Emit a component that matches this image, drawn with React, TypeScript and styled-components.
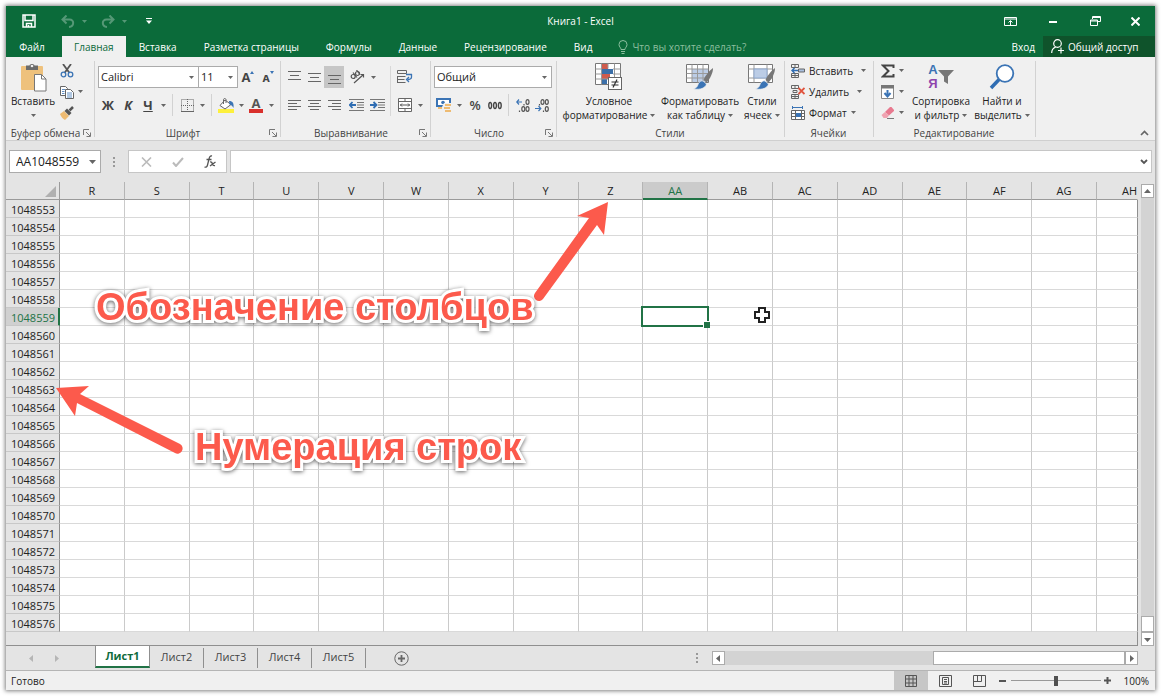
import React from 'react';
import styled, { createGlobalStyle } from 'styled-components';

const GREEN = '#0b6b3a';

const Global = createGlobalStyle`
  * { box-sizing: border-box; }
  body {
    margin: 0;
    padding: 6px;
    background: #fff;
    font-family: "Open Sans", "Noto Sans", sans-serif;
    font-size: 10px;
    line-height: 14px;
    color: #222;
  }
  button, select, input { font: inherit; color: inherit; }
  button { border: 0; padding: 0; margin: 0; background: none; white-space: nowrap; }
  svg { display: block; flex: none; }
`;

const Window = styled.main`
  background: #e4e4e4;
  box-shadow: 0 0 4px 1px rgba(0, 0, 0, 0.5);
`;

/* ---------- title bar and ribbon tabs ---------- */

const TitleBar = styled.header`
  display: grid;
  grid-template-columns: 1fr auto 1fr;
  align-items: center;
  height: 30px;
  background: ${GREEN};
  color: #fff;
`;

const Title = styled.h1`
  margin: 0;
  font-size: 10px;
  font-weight: 400;
`;

const QuickAccess = styled.div`
  display: flex;
  align-items: center;
  gap: 8px;
  padding-left: 13px;
`;

const History = styled.div`
  display: flex;
  &:nth-child(2) { margin-left: 11px; }
`;

const WindowControls = styled.div`
  display: flex;
  justify-content: flex-end;
`;

const IconButton = styled.button<{ $w: number; $dim?: boolean; $active?: boolean }>`
  display: flex;
  align-items: center;
  justify-content: center;
  width: ${p => p.$w}px;
  height: 22px;
  opacity: ${p => (p.$dim ? 0.3 : 1)};
  background: ${p => (p.$active ? '#c6c6c6' : 'transparent')};
`;

const TabBar = styled.nav`
  display: flex;
  height: 21px;
  background: ${GREEN};
  color: #fff;
`;

const FileTab = styled.button`
  width: 56px;
  padding-right: 4px;
`;

const RibbonTab = styled.button<{ $active?: boolean }>`
  padding: ${p => (p.$active ? '0 12px' : '0 14px 0 13px')};
  background: ${p => (p.$active ? '#f0f0f0' : 'transparent')};
  color: ${p => (p.$active ? GREEN : 'inherit')};
`;

const TellMe = styled.button`
  display: flex;
  align-items: center;
  gap: 4px;
  padding: 0 12px;
  color: #8dbf9f;
`;

const SignIn = styled.button`
  margin-left: auto;
  padding: 0 8px;
`;

const Share = styled.button`
  display: flex;
  align-items: center;
  gap: 4px;
  width: 112px;
  padding: 0 0 0 8px;
  background: #0f532b;
`;

/* ---------- ribbon ---------- */

const Ribbon = styled.section`
  display: flex;
  height: 84px;
  background: #f0f0f0;
  border-bottom: 1px solid #cfcfcf;
`;

const Group = styled.div<{ $w: number }>`
  position: relative;
  display: flex;
  flex-direction: column;
  flex: none;
  width: ${p => p.$w}px;
  &::after {
    content: "";
    position: absolute;
    right: 0;
    top: 4px;
    bottom: 3px;
    width: 1px;
    background: #d2d2d2;
  }
`;

const GroupBody = styled.div<{ $pad?: number }>`
  display: flex;
  flex: 1;
  padding: 3px 0 0 ${p => p.$pad ?? 3}px;
`;

const GroupFoot = styled.div`
  display: flex;
  align-items: center;
  height: 14px;
  padding: 0 4px 0 2px;
  color: #444;
`;

const GroupName = styled.span`
  flex: 1;
  text-align: center;
  white-space: nowrap;
`;

const TwoRows = styled.div`
  display: flex;
  flex-direction: column;
  gap: 6px;
  padding-top: 6px;
`;

const ThreeRows = styled.div<{ $w?: number }>`
  display: flex;
  flex-direction: column;
  width: ${p => (p.$w ? p.$w + 'px' : 'auto')};
`;

const Row = styled.div`
  display: flex;
  align-items: center;
  height: 22px;
`;

const SmallButton = styled.button<{ $gap?: number }>`
  display: flex;
  align-items: center;
  gap: 4px;
  height: 21px;
  > svg:last-child:not(:first-child) { margin-left: ${p => p.$gap ?? 0}px; }
`;

const BigButton = styled.button<{ $w: number }>`
  display: flex;
  flex-direction: column;
  align-items: center;
  width: ${p => p.$w}px;
  height: 64px;
`;

const BigIcon = styled.span`
  display: flex;
  align-items: center;
  height: 34px;
`;

const Line = styled.span`
  display: flex;
  align-items: center;
  gap: 3px;
  height: 14px;
`;

const Divider = styled.span`
  align-self: stretch;
  width: 1px;
  margin: 0 4px;
  background: #d2d2d2;
`;

const TallDivider = styled.span`
  width: 1px;
  height: 50px;
  margin: 6px 4px 0;
  background: #d8d8d8;
`;

const Letter = styled.span<{ $style?: string }>`
  font-size: 13px;
  font-weight: ${p => (p.$style === 'percent' ? 600 : 700)};
  color: #444;
  font-style: ${p => (p.$style === 'italic' ? 'italic' : 'normal')};
  text-decoration: ${p => (p.$style === 'underline' ? 'underline' : 'none')};
`;

const Combo = styled.label<{ $w: number; $h?: number }>`
  display: grid;
  align-items: center;
  flex: none;
  width: ${p => p.$w}px;
  height: ${p => p.$h ?? 22}px;
  border: 1px solid #ababab;
  background: #fff;
  & + & { margin-left: -1px; }
  > select, > svg { grid-area: 1 / 1; }
  > svg { justify-self: end; margin-right: 4px; pointer-events: none; }
`;

const Select = styled.select<{ $big?: boolean }>`
  appearance: none;
  width: 100%;
  height: 100%;
  padding: 0 0 0 ${p => (p.$big ? 6 : 2)}px;
  border: 0;
  background: transparent;
  font-size: ${p => (p.$big ? 12 : 11)}px;
`;

const Collapse = styled.button`
  align-self: flex-end;
  margin: 0 6px 4px auto;
`;

/* ---------- formula bar ---------- */

const FormulaBar = styled.div`
  display: flex;
  align-items: center;
  height: 41px;
  padding: 0 3px 0 3px;
`;

const Dots = styled.span`
  display: flex;
  justify-content: center;
  width: 27px;
`;

const FxBox = styled.div`
  display: flex;
  align-items: center;
  justify-content: space-around;
  width: 99px;
  height: 23px;
  margin-right: 3px;
  padding: 0 0 0 2px;
  border: 1px solid #c6c6c6;
  background: #fff;
`;

const FormulaField = styled.div`
  display: flex;
  align-items: center;
  flex: 1;
  height: 23px;
  padding-right: 3px;
  border: 1px solid #c6c6c6;
  background: #fff;
`;

const FormulaInput = styled.input`
  flex: 1;
  min-width: 0;
  height: 100%;
  border: 0;
  background: transparent;
`;

/* ---------- sheet ---------- */

const SheetArea = styled.section`
  position: relative;
  display: flex;
`;

const GridPane = styled.div`
  flex: 1;
  min-width: 0;
  border-bottom: 1px solid #8f8f8f;
`;

const GridTable = styled.table`
  width: 100%;
  table-layout: fixed;
  border-collapse: separate;
  border-spacing: 0;
  font-size: 11px;
`;

const ColHead = styled.th<{ $sel?: boolean; $last?: boolean }>`
  height: 18px;
  padding: ${p => (p.$sel ? 1 : 0)}px 0 0;
  overflow: hidden;
  font-weight: 400;
  text-align: ${p => (p.$last ? 'right' : 'center')};
  border-right: 1px solid ${p => (p.$last ? 'transparent' : '#b4b4b4')};
  border-bottom: ${p => (p.$sel ? '2px solid #217346' : '1px solid #9a9a9a')};
  background: ${p => (p.$sel ? '#cbcbcb' : '#e4e4e4')};
  color: ${p => (p.$sel ? '#217346' : '#222')};
`;

const Corner = styled.th`
  padding: 0 3px 2px 0;
  border-right: 1px solid #9a9a9a;
  border-bottom: 1px solid #9a9a9a;
  vertical-align: bottom;
  > svg { margin-left: auto; }
`;

const RowHead = styled.th<{ $sel?: boolean }>`
  height: 18px;
  padding: 2px ${p => (p.$sel ? 3 : 4)}px 0 0;
  font-weight: 400;
  text-align: right;
  border-right: ${p => (p.$sel ? '2px solid #217346' : '1px solid #8f8f8f')};
  border-bottom: 1px solid #c8c8c8;
  background: ${p => (p.$sel ? '#d0d0d0' : '#e4e4e4')};
  color: ${p => (p.$sel ? '#217346' : '#222')};
`;

const Cell = styled.td<{ $last?: boolean }>`
  height: 18px;
  padding: 0;
  background: #fff;
  border-right: 1px solid ${p => (p.$last ? '#8f8f8f' : '#cacaca')};
  border-bottom: 1px solid #d9d9d9;
`;

const ActiveCell = styled(Cell)`
  position: relative;
  &::before {
    content: "";
    position: absolute;
    inset: -2px -2px -2px -2px;
    border: 2px solid #217346;
  }
  &::after {
    content: "";
    position: absolute;
    right: -3px;
    bottom: -3px;
    width: 6px;
    height: 6px;
    border: solid #fff;
    border-width: 1px 0 0 1px;
    background: #217346;
  }
`;

const GridEnd = styled.div`
  height: 13px;
  border-right: 1px solid #8f8f8f;
`;

const VScroll = styled.div`
  display: flex;
  flex-direction: column;
  width: 17px;
  padding: 2px 1px 0 3px;
`;

const ScrollButton = styled.button`
  display: flex;
  align-items: center;
  justify-content: center;
  flex: none;
  width: 13px;
  height: 14px;
  border: 1px solid #ababab;
  background: #fff;
`;

const Track = styled.div`
  display: flex;
  flex: 1;
  align-items: flex-end;
  justify-content: flex-end;
  background: #d3d3d3;
`;

const Thumb = styled.div<{ $w: string; $h: number }>`
  width: ${p => p.$w};
  height: ${p => p.$h}px;
  border: 1px solid #ababab;
  background: #fff;
`;

const Overlay = styled.svg`
  position: absolute;
  left: 0;
  top: 0;
  pointer-events: none;
`;

const Note = styled.p<{ $x: number; $y: number }>`
  position: absolute;
  left: ${p => p.$x}px;
  top: ${p => p.$y}px;
  margin: 0;
  font: 700 38px/44px "Liberation Sans", Arial, sans-serif;
  white-space: nowrap;
  color: #fc5a4c;
  -webkit-text-stroke: 6px #fff;
  paint-order: stroke fill;
  filter: drop-shadow(0 1px 2px rgba(0, 0, 0, 0.6));
`;

/* ---------- sheet tabs and status bar ---------- */

const SheetBar = styled.div`
  display: flex;
  align-items: center;
  height: 24px;
  font-size: 11px;
`;

const SheetNav = styled.div`
  display: flex;
  justify-content: center;
  gap: 18px;
  width: 89px;
  padding-right: 13px;
`;

const SheetTab = styled.button<{ $active?: boolean }>`
  align-self: flex-start;
  width: ${p => (p.$active ? 55 : 54)}px;
  color: #444;
  ${p =>
    p.$active
      ? `
    height: 23px;
    margin-top: -1px;
    border: 1px solid #8f8f8f;
    border-top: 0;
    border-bottom: 2px solid #217346;
    background: #fff;
    color: #0f6b3c;
    font-weight: 700;
  `
      : `
    height: 20px;
    margin-top: 2px;
    padding-bottom: 2px;
    border-right: 1px solid #8f8f8f;
  `}
`;

const AddSheet = styled.button`
  margin-left: 28px;
`;

const HScroll = styled.div`
  display: flex;
  width: 426px;
  height: 14px;
  margin-right: 17px;
`;

const BarDots = styled.span`
  margin: 0 13px 0 auto;
`;

const StatusBar = styled.footer`
  display: flex;
  align-items: center;
  height: 20px;
  padding: 0 6px 0 5px;
  border-top: 1px solid #b5b5b5;
  background: #f0f0f0;
`;

const StatusText = styled.span`
  margin-right: auto;
`;

const ViewButton = styled.button<{ $active?: boolean }>`
  display: flex;
  align-items: center;
  justify-content: center;
  width: 34px;
  height: 19px;
  background: ${p => (p.$active ? '#c6c6c6' : 'transparent')};
`;

const Zoom = styled.input`
  appearance: none;
  width: 90px;
  height: 13px;
  margin: 0 3px;
  background: linear-gradient(#999, #999) center / 100% 1px no-repeat;
  &::-webkit-slider-thumb {
    appearance: none;
    width: 4px;
    height: 10px;
    background: #505050;
  }
`;

const ZoomValue = styled.span`
  width: 38px;
  text-align: right;
`;

/* ---------- icons ---------- */

const Caret = ({ c = '#666' }: { c?: string }) => (
  <svg width="5" height="3" viewBox="0 0 5 3"><path d="M0 0h5L2.5 3z" fill={c} /></svg>
);

const CaretButton = ({ w = 10, label, dim, c }: { w?: number; label: string; dim?: boolean; c?: string }) => (
  <IconButton $w={w} $dim={dim} aria-label={label}><Caret c={c} /></IconButton>
);

const Launcher = () => (
  <button aria-label="Параметры">
    <svg width="8" height="8" viewBox="0 0 8 8" fill="none" stroke="#777">
      <path d="M.5 6V.5H6M3 3l4 4M7.5 3.500V7.500H3.500" />
    </svg>
  </button>
);

const SaveIcon = () => (
  <svg width="14" height="14" viewBox="0 0 14 14" fill="none" stroke="#fff" strokeWidth="1.500">
    <path d="M1 1h12v12H1zM3 1v5.500h8V1M4.500 13V9.500h5V13" /><path d="M6.500 11v2" />
  </svg>
);

const Undo = ({ flip }: { flip?: boolean }) => (
  <svg width="14" height="13" viewBox="0 0 14 13" fill="none" stroke="#fff" strokeWidth="2">
    <g transform={flip ? 'translate(14 0) scale(-1 1)' : undefined}>
      <path d="M5.500 .5L1.500 4.500l4 4M2 4.500h6.500c5 0 5 7-.5 7.500" />
    </g>
  </svg>
);

const Paste = () => (
  <svg width="27" height="29" viewBox="0 0 27 29">
    <rect x="1" y="3" width="22" height="24" rx="1" fill="#eec17c" />
    <path d="M6 2.500h3.500C10 .5 14 .5 14.500 2.500H18V7H6z" fill="#6b6b6b" /><circle cx="12" cy="3" r="1.300" fill="#f0f0f0" />
    <path d="M14.500 11.500h7l4.500 4.500v12H14.500z" fill="#fff" stroke="#777" />
    <path d="M21.500 11.500V16H26" fill="none" stroke="#777" />
  </svg>
);

const Cut = () => (
  <svg width="14" height="14" viewBox="0 0 14 14" fill="none">
    <path d="M3 0l6.500 9M11 0L4.500 9" stroke="#555" strokeWidth="1.800" />
    <circle cx="3.500" cy="10.500" r="2.300" stroke="#3b74b5" strokeWidth="1.300" />
    <circle cx="10.500" cy="10.500" r="2.300" stroke="#3b74b5" strokeWidth="1.300" />
  </svg>
);

const Copy = () => (
  <svg width="14" height="14" viewBox="0 0 14 14" fill="#fff" stroke="#666">
    <path d="M.5 1.500h5l2 2v7h-7z" /><path d="M5.500 4.500h5l3 3v6h-8z" />
    <path d="M2 4.500h3M2 6.500h2.500M2 8.500h2.500M7 8h5M7 10h5M7 12h5" stroke="#3b74b5" strokeWidth=".8" />
  </svg>
);

const Painter = () => (
  <svg width="14" height="14" viewBox="0 0 14 14">
    <path d="M0 8l4-3 5 5-4 4C3 13 1 11 0 8z" fill="#eebb72" />
    <path d="M4.500 5L7 2.500 11.500 7 9 9.500z" fill="#555" /><path d="M9.500 4.500L13 1" stroke="#555" strokeWidth="2.500" />
  </svg>
);

const BordersIcon = () => (
  <svg width="13" height="13" viewBox="0 0 13 13" fill="none" stroke="#666">
    <path d="M.5 .5h12v12H.5zM6.500 0v13M0 6.500h13" strokeDasharray="1 1" /><path d="M0 12.500h13" />
  </svg>
);

const FillIcon = () => (
  <svg width="17" height="15" viewBox="0 0 17 15">
    <rect x="0" y="11" width="16" height="4" fill="#fdf03c" />
    <path d="M7 2l6 4.500-6 4.500-5-3.500z" fill="#fff" stroke="#666" /><path d="M5.500 6V1.500a1.300 1.300 0 0 1 2.500 0V5" fill="none" stroke="#666" />
    <path d="M11 3c4 0 5 2.500 4.500 7-1-2-2-3-4-3.500z" fill="#3b74b5" />
  </svg>
);

const FontColorMark = styled.span`
  display: flex;
  flex-direction: column;
  align-items: center;
  width: 14px;
  height: 15px;
  border-bottom: 4px solid #d9302c;
  font-size: 13px;
  line-height: 11px;
  font-weight: 700;
  color: #555;
`;

const Lines = ({ rows, w = 13, h = 13, c = '#666' }: { rows: [number, number, number][]; w?: number; h?: number; c?: string }) => (
  <svg width={w} height={h} viewBox={`0 0 ${w} ${h}`}>
    {rows.map(([x, y, l]) => <rect key={y} x={x} y={y} width={l} height="1" fill={c} />)}
  </svg>
);

const Orientation = () => (
  <svg width="15" height="14" viewBox="0 0 15 14" fill="none" stroke="#555" strokeWidth="1.200">
    <circle cx="3.200" cy="6.500" r="2" /><path d="M3 2.500l4 5" /><circle cx="7.500" cy="3.500" r="2" /><path d="M6.500 0l3.500 4.500" />
    <path d="M4 13L13.500 4.500M10.500 4.500h3v3" />
  </svg>
);

const Indent = ({ right }: { right?: boolean }) => (
  <svg width="15" height="12" viewBox="0 0 15 12">
    <path d="M0 .5h15M8 3.500h7M8 6h7M8 8.500h7M0 11.500h15" stroke="#777" />
    <path d={right ? 'M0 6h6M3.500 3L6.500 6 3.500 9' : 'M7 6H1M3.500 3L.8 6l2.700 3'} stroke="#2f6db3" strokeWidth="1.800" fill="none" />
  </svg>
);

const Wrap = () => (
  <svg width="16" height="14" viewBox="0 0 16 14" fill="none" stroke="#666">
    <path d="M.5 .5h9v3h-9zM.5 6.500h8M.5 9.500h7M.5 12.500h8M.5 6v7" />
    <path d="M9 4.500h6M14.500 4v3c0 1.500-1 2.500-4 2.500M12 7l-2.500 2.500L12 12" stroke="#3b74b5" strokeWidth="1.300" />
  </svg>
);

const Merge = () => (
  <svg width="14" height="14" viewBox="0 0 14 14" fill="none" stroke="#666">
    <path d="M.5 .5h13v13H.5zM.5 3.500h13M.5 10.500h13M7 .5v3M7 10.500v3" fill="#fff" />
    <path d="M2 7h10M4 5.500L2.500 7 4 8.500M10 5.500L11.500 7 10 8.500" stroke="#555" />
  </svg>
);

const Currency = () => (
  <svg width="16" height="14" viewBox="0 0 16 14">
    <path d="M1 1h13v7H1z" fill="#fff" stroke="#3b74b5" strokeWidth="2" /><circle cx="7" cy="4.500" r="1.800" fill="#3b74b5" />
    <path d="M8 5h7v9H6V9z" fill="#f0f0f0" />
    <g fill="#eebb72"><rect x="9" y="6" width="6" height="2" /><rect x="8" y="9" width="6" height="2" /><rect x="9" y="12" width="6" height="2" /><rect x="2" y="9" width="4" height="2" /></g>
  </svg>
);

const Decimal = ({ less }: { less?: boolean }) => (
  <svg width="14" height="13" viewBox="0 0 14 13" fill="none" stroke="#555" strokeWidth="1.200">
    {less ? (
      <>
        <ellipse cx="7.500" cy="3" rx="1.500" ry="2.300" /><ellipse cx="11.800" cy="3" rx="1.500" ry="2.300" /><path d="M4.500 5v1.500" />
        <ellipse cx="11.800" cy="10" rx="1.500" ry="2.300" /><path d="M8.500 11.500V13" /><path d="M0 9.500h5.500M3.500 7l2.300 2.500L3.500 12" stroke="#3b74b5" />
      </>
    ) : (
      <>
        <ellipse cx="11.500" cy="3" rx="1.500" ry="2.300" /><path d="M8 5v1.500M3.500 11.500V13" />
        <ellipse cx="7.300" cy="10" rx="1.500" ry="2.300" /><ellipse cx="11.500" cy="10" rx="1.500" ry="2.300" /><path d="M6 3H.8M3 .5L.8 3 3 5.500" stroke="#3b74b5" />
      </>
    )}
  </svg>
);

const CondFormat = () => (
  <svg width="28" height="28" viewBox="0 0 28 28">
    <path d="M.5 .5h25v21H.5z" fill="#fff" stroke="#777" />
    <rect x="7" y="1" width="6" height="5" fill="#cf5b4c" /><rect x="7" y="6" width="11" height="5" fill="#3b6fa8" />
    <rect x="7" y="11" width="8" height="5" fill="#cf5b4c" /><rect x="7" y="16" width="5" height="5" fill="#3b6fa8" />
    <path d="M.5 6h6M18 6h7.500M.5 11h6M18 11h7.500M.5 16h25M6.500 .5v21M13 .5v5M19.500 .5v21" stroke="#999" fill="none" />
    <rect x="13.500" y="14.500" width="13" height="12" fill="#fff" stroke="#666" />
    <path d="M16.500 19h7M16.500 22h7M22 16.500l-4 8" stroke="#333" strokeWidth="1.200" />
  </svg>
);

const Brush = () => (
  <g>
    <path d="M27 4c-4 3-8 8-9.500 12l3 2.500C24 15 27 9 27 4z" fill="#777" />
    <path d="M17 17l3.500 3c-1 4-6 6-13 5 4-1.500 4-3.500 5-5.500 1-2 3-3 4.500-2.500z" fill="#3b74b5" stroke="#f0f0f0" strokeWidth=".7" />
  </g>
);

const FormatTable = () => (
  <svg width="28" height="27" viewBox="0 0 28 27">
    <path d="M.5 .5h22v18H.5z" fill="#fff" stroke="#777" /><rect x="6" y="5" width="16" height="13" fill="#bccde6" />
    <path d="M.5 5h22M.5 9.500h22M.5 14h22M6 .5v18M11.500 .5v18M17 .5v18" stroke="#999" fill="none" /><Brush />
  </svg>
);

const CellStyles = () => (
  <svg width="28" height="27" viewBox="0 0 28 27">
    <path d="M.5 .5h24v18H.5z" fill="#fff" stroke="#777" />
    <path d="M.5 5h24M.5 14h24M6 .5v18M19 .5v18" stroke="#999" fill="none" /><rect x="6" y="5" width="13" height="9" fill="#bccde6" stroke="#8fa9d0" /><Brush />
  </svg>
);

const CellsIcon = ({ kind }: { kind: 'ins' | 'del' | 'fmt' }) => (
  <svg width="14" height="14" viewBox="0 0 14 14" fill="none" stroke="#666">
    {kind === 'fmt' ? (
      <>
        <path d="M1 1.500h11M1.500 0v3M11.500 0v3" stroke="#3b74b5" /><path d="M.5 4.500h13v9H.5zM.5 7.500h13M.5 10.500h13M4.500 4.500v9M10.500 4.500v9" fill="#fff" />
        <rect x="5" y="7" width="5" height="4" fill="#3b74b5" stroke="none" />
      </>
    ) : (
      <>
        <path d="M.5 .5h7v3h-7zM4 .5v3M.5 9.500h7v4h-7zM4 9.500v4M.5 11.500h7" />
        {kind === 'ins' ? (
          <><path d="M7.500 5h6v3h-6z" fill="#a9c0e0" /><path d="M7 6.500H1M3.500 4L1 6.500 3.500 9" stroke="#2f6db3" strokeWidth="1.500" /></>
        ) : (
          <><path d="M2 5.500h4v2H2z" /><path d="M7.500 3l6 6M13.500 3l-6 6" stroke="#e0533d" strokeWidth="1.800" /></>
        )}
      </>
    )}
  </svg>
);

const Sigma = () => (
  <svg width="14" height="14" viewBox="0 0 14 14" fill="none" stroke="#444" strokeWidth="2"><path d="M12.500 4V1.500H2L7.500 7 2 12.500h10.500V10" /></svg>
);
const FillDown = () => (
  <svg width="14" height="14" viewBox="0 0 14 14"><path d="M.5 .5h12v13H.5z" fill="#fff" stroke="#888" /><rect width="13" height="3.500" fill="#777" />
    <path d="M6.500 5v6M3.500 8l3 3.500 3-3.500" fill="none" stroke="#3b74b5" strokeWidth="2" /></svg>
);
const Eraser = () => (
  <svg width="14" height="12" viewBox="0 0 14 12"><path d="M4 5l5-5h1.500L13 3v1L8 8.500z" fill="#e8798f" /><path d="M.5 8L4 5l4 3.500L6 11H2.500z" fill="#f0a3b1" /><path d="M6 11.500h7" stroke="#777" /></svg>
);

const SortLetters = styled.span<{ $c: string }>`
  font: 700 13px/14px "Liberation Sans", Arial, sans-serif;
  color: ${p => p.$c};
`;
const SortStack = styled.span`
  display: flex;
  flex-direction: column;
  align-items: center;
`;
const Funnel = () => (
  <svg width="16" height="14" viewBox="0 0 16 14"><path d="M0 0h16l-6 6.500V14l-4-2.500v-5z" fill="#777" /></svg>
);
const Search = () => (
  <svg width="26" height="26" viewBox="0 0 26 26"><path d="M2 24l8.500-9" stroke="#2f6db3" strokeWidth="3.500" /><circle cx="16" cy="9.500" r="8.300" fill="#fff" stroke="#3b74b5" strokeWidth="1.800" /></svg>
);

const ArrowHead = ({ d, c = '#666' }: { d: 'l' | 'r' | 'u' | 'd'; c?: string }) => {
  const paths = { l: 'M5 0v7L1 3.500z', r: 'M2 0v7l4-3.500z', u: 'M0 5h7L3.500 1z', d: 'M0 2h7L3.500 6z' };
  return <svg width="7" height="7" viewBox="0 0 7 7"><path d={paths[d]} fill={c} /></svg>;
};

const DotColumn = () => (
  <svg width="3" height="10" viewBox="0 0 3 10" fill="#999"><path d="M0 0h2v2H0zM0 4h2v2H0zM0 8h2v2H0z" /></svg>
);

/* ---------- data ---------- */

const tabs = ['Вставка', 'Разметка страницы', 'Формулы', 'Данные', 'Рецензирование', 'Вид'];
const columns = ['R', 'S', 'T', 'U', 'V', 'W', 'X', 'Y', 'Z', 'AA', 'AB', 'AC', 'AD', 'AE', 'AF', 'AG', 'AH'];
const rows = Array.from({ length: 24 }, (_, i) => 1048553 + i);

const Foot = ({ name, plain }: { name: string; plain?: boolean }) => (
  <GroupFoot><GroupName>{name}</GroupName>{!plain && <Launcher />}</GroupFoot>
);

export default function App() {
  return (
    <Window>
      <Global />
      <TitleBar>
        <QuickAccess>
          <IconButton $w={20} aria-label="Сохранить"><SaveIcon /></IconButton>
          <History>
            <IconButton $w={20} $dim aria-label="Отменить"><Undo /></IconButton>
            <CaretButton w={12} dim c="#fff" label="Список отмены" />
          </History>
          <History>
            <IconButton $w={20} $dim aria-label="Вернуть"><Undo flip /></IconButton>
            <CaretButton w={12} dim c="#fff" label="Список возврата" />
          </History>
          <IconButton $w={22} aria-label="Настройка панели">
            <svg width="6" height="6" viewBox="0 0 6 6" fill="#fff"><path d="M0 0h6v1H0zM0 2.500h6L3 6z" /></svg>
          </IconButton>
        </QuickAccess>
        <Title>Книга1 - Excel</Title>
        <WindowControls>
          <IconButton $w={44} aria-label="Параметры ленты">
            <svg width="13" height="11" viewBox="0 0 13 11" fill="none" stroke="#fff"><path d="M.5 1.500h12v8H.5zM.5 3h12M6.500 9V5M4.500 6.500l2-2 2 2" /></svg>
          </IconButton>
          <IconButton $w={42} aria-label="Свернуть"><svg width="8" height="8" viewBox="0 0 8 8"><rect y="4" width="8" height="2" fill="#fff" /></svg></IconButton>
          <IconButton $w={42} aria-label="Восстановить">
            <svg width="11" height="10" viewBox="0 0 11 10" fill="none" stroke="#fff"><path d="M2.500 3V.5h8v5H8M2.500 1.500h8M.5 4h7v5.500h-7zM.5 5h7" /></svg>
          </IconButton>
          <IconButton $w={39} aria-label="Закрыть"><svg width="9" height="9" viewBox="0 0 9 9" stroke="#fff" strokeWidth="2"><path d="M.5 .5l8 8M8.500 .5l-8 8" /></svg></IconButton>
        </WindowControls>
      </TitleBar>

      <TabBar>
        <FileTab>Файл</FileTab>
        <RibbonTab $active>Главная</RibbonTab>
        {tabs.map(t => <RibbonTab key={t}>{t}</RibbonTab>)}
        <TellMe>
          <svg width="10" height="14" viewBox="0 0 10 14" fill="none" stroke="#8dbf9f"><path d="M3 9.500C3 7.500 1 7 1 4.500a4 4 0 0 1 8 0C9 7 7 7.500 7 9.500zM3 11.500h4M3.500 13.500h3" /></svg>
          Что вы хотите сделать?
        </TellMe>
        <SignIn>Вход</SignIn>
        <Share>
          <svg width="13" height="15" viewBox="0 0 13 15" fill="none" stroke="#fff" strokeWidth="1.200"><circle cx="6.500" cy="4.500" r="3.800" /><path d="M.7 14c0-3 1.500-5 4-6M10 8.500v6M7 11.500h6" /></svg>
          Общий доступ
        </Share>
      </TabBar>

      <Ribbon>
        <Group $w={89}>
          <GroupBody $pad={0}>
            <BigButton $w={54}>
              <BigIcon><Paste /></BigIcon><Line>Вставить</Line><Line><Caret /></Line>
            </BigButton>
            <ThreeRows>
              <SmallButton aria-label="Вырезать"><Cut /></SmallButton>
              <SmallButton aria-label="Копировать"><Copy /><Caret /></SmallButton>
              <SmallButton aria-label="Формат по образцу"><Painter /></SmallButton>
            </ThreeRows>
          </GroupBody>
          <Foot name="Буфер обмена" />
        </Group>

        <Group $w={186}>
          <GroupBody>
            <TwoRows>
              <Row>
                <Combo $w={101}><Select aria-label="Шрифт"><option>Calibri</option></Select><Caret /></Combo>
                <Combo $w={40}><Select aria-label="Размер"><option>11</option></Select><Caret /></Combo>
                <IconButton $w={20} aria-label="Увеличить размер"><Letter>A</Letter><svg width="4" height="12" viewBox="0 0 4 12"><path d="M0 3h4L2 0z" fill="#3b74b5" /></svg></IconButton>
                <IconButton $w={20} aria-label="Уменьшить размер"><Letter>ᴀ</Letter><svg width="4" height="12" viewBox="0 0 4 12"><path d="M0 0h4L2 3z" fill="#3b74b5" /></svg></IconButton>
              </Row>
              <Row>
                <IconButton $w={20}><Letter>Ж</Letter></IconButton>
                <IconButton $w={20}><Letter $style="italic">К</Letter></IconButton>
                <IconButton $w={20}><Letter $style="underline">Ч</Letter></IconButton>
                <CaretButton label="Подчёркивание" />
                <Divider />
                <IconButton $w={20} aria-label="Границы"><BordersIcon /></IconButton>
                <CaretButton label="Виды границ" />
                <Divider />
                <IconButton $w={20} aria-label="Заливка"><FillIcon /></IconButton>
                <CaretButton label="Цвет заливки" />
                <IconButton $w={20} aria-label="Цвет текста"><FontColorMark>A</FontColorMark></IconButton>
                <CaretButton label="Цвета текста" />
              </Row>
            </TwoRows>
          </GroupBody>
          <Foot name="Шрифт" />
        </Group>

        <Group $w={150}>
          <GroupBody>
            <TwoRows>
              <Row>
                <IconButton $w={20} aria-label="По верхнему краю"><Lines rows={[[0, 0, 13], [2, 4, 9], [0, 8, 13]]} /></IconButton>
                <IconButton $w={20} aria-label="По середине"><Lines rows={[[0, 2, 13], [2, 6, 9], [0, 10, 13]]} /></IconButton>
                <IconButton $w={20} $active aria-label="По нижнему краю"><Lines rows={[[0, 4, 13], [2, 8, 9], [0, 12, 13]]} /></IconButton>
                <IconButton $w={26} aria-label="Ориентация"><Orientation /></IconButton>
                <CaretButton w={6} label="Виды ориентации" />
              </Row>
              <Row>
                <IconButton $w={20} aria-label="По левому краю"><Lines rows={[[0, 1, 13], [0, 4, 9], [0, 7, 13], [0, 10, 9]]} /></IconButton>
                <IconButton $w={20} aria-label="По центру"><Lines rows={[[0, 1, 13], [2, 4, 9], [0, 7, 13], [2, 10, 9]]} /></IconButton>
                <IconButton $w={20} aria-label="По правому краю"><Lines rows={[[0, 1, 13], [4, 4, 9], [0, 7, 13], [4, 10, 9]]} /></IconButton>
                <IconButton $w={24} aria-label="Уменьшить отступ"><Indent /></IconButton>
                <IconButton $w={18} aria-label="Увеличить отступ"><Indent right /></IconButton>
              </Row>
            </TwoRows>
            <TallDivider />
            <TwoRows>
              <Row><IconButton $w={20} aria-label="Перенос текста"><Wrap /></IconButton></Row>
              <Row><IconButton $w={20} aria-label="Объединить"><Merge /></IconButton><CaretButton label="Виды объединения" /></Row>
            </TwoRows>
          </GroupBody>
          <Foot name="Выравнивание" />
        </Group>

        <Group $w={126}>
          <GroupBody>
            <TwoRows>
              <Row><Combo $w={118}><Select aria-label="Формат числа"><option>Общий</option></Select><Caret /></Combo></Row>
              <Row>
                <IconButton $w={20} aria-label="Денежный"><Currency /></IconButton>
                <CaretButton label="Валюты" />
                <IconButton $w={22}><Letter $style="percent">%</Letter></IconButton>
                <IconButton $w={18} aria-label="Разделитель тысяч">
                  <svg width="14" height="9" viewBox="0 0 14 9" fill="none" stroke="#444" strokeWidth="1.400"><ellipse cx="2.200" cy="4.500" rx="1.400" ry="3" /><ellipse cx="7" cy="4.500" rx="1.400" ry="3" /><ellipse cx="11.800" cy="4.500" rx="1.400" ry="3" /></svg>
                </IconButton>
                <Divider />
                <IconButton $w={20} aria-label="Увеличить разрядность"><Decimal /></IconButton>
                <IconButton $w={18} aria-label="Уменьшить разрядность"><Decimal less /></IconButton>
              </Row>
            </TwoRows>
          </GroupBody>
          <Foot name="Число" />
        </Group>

        <Group $w={228}>
          <GroupBody>
            <BigButton $w={98}>
              <BigIcon><CondFormat /></BigIcon><Line>Условное</Line><Line>форматирование<Caret /></Line>
            </BigButton>
            <BigButton $w={84}>
              <BigIcon><FormatTable /></BigIcon><Line>Форматировать</Line><Line>как таблицу<Caret /></Line>
            </BigButton>
            <BigButton $w={40}>
              <BigIcon><CellStyles /></BigIcon><Line>Стили</Line><Line>ячеек<Caret /></Line>
            </BigButton>
          </GroupBody>
          <Foot name="Стили" plain />
        </Group>

        <Group $w={89}>
          <GroupBody $pad={6}>
            <ThreeRows>
              <SmallButton $gap={4}><CellsIcon kind="ins" />Вставить<Caret /></SmallButton>
              <SmallButton $gap={4}><CellsIcon kind="del" />Удалить<Caret /></SmallButton>
              <SmallButton><CellsIcon kind="fmt" />Формат<Caret /></SmallButton>
            </ThreeRows>
          </GroupBody>
          <Foot name="Ячейки" plain />
        </Group>

        <Group $w={162}>
          <GroupBody $pad={7}>
            <ThreeRows $w={26}>
              <SmallButton aria-label="Сумма"><Sigma /><Caret /></SmallButton>
              <SmallButton aria-label="Заполнить"><FillDown /><Caret /></SmallButton>
              <SmallButton aria-label="Очистить"><Eraser /><Caret /></SmallButton>
            </ThreeRows>
            <BigButton $w={68}>
              <BigIcon><SortStack><SortLetters $c="#3b74b5">А</SortLetters><SortLetters $c="#8e44ad">Я</SortLetters></SortStack><Funnel /></BigIcon>
              <Line>Сортировка</Line><Line>и фильтр<Caret /></Line>
            </BigButton>
            <BigButton $w={54}>
              <BigIcon><Search /></BigIcon><Line>Найти и</Line><Line>выделить<Caret /></Line>
            </BigButton>
          </GroupBody>
          <Foot name="Редактирование" plain />
        </Group>
        <Collapse aria-label="Свернуть ленту">
          <svg width="9" height="6" viewBox="0 0 9 6" fill="none" stroke="#666" strokeWidth="1.700"><path d="M1 5l3.500-3.500L8 5" /></svg>
        </Collapse>
      </Ribbon>

      <FormulaBar>
        <Combo $w={92} $h={23}><Select $big aria-label="Имя ячейки"><option>AA1048559</option></Select>
          <svg width="7" height="4" viewBox="0 0 7 4"><path d="M0 0h7L3.500 4z" fill="#666" /></svg></Combo>
        <Dots><DotColumn /></Dots>
        <FxBox>
          <button aria-label="Отмена"><svg width="11" height="10" viewBox="0 0 11 10" stroke="#bbb" strokeWidth="1.600"><path d="M1 .5l9 9M10 .5l-9 9" /></svg></button>
          <button aria-label="Ввод"><svg width="12" height="10" viewBox="0 0 12 10" fill="none" stroke="#bbb" strokeWidth="2"><path d="M1 5.500L4 9l7-8" /></svg></button>
          <button aria-label="Вставить функцию">
            <svg width="12" height="13" viewBox="0 0 12 13" fill="none" stroke="#555" strokeWidth="1.300"><path d="M8 1C6 .5 5.500 2 5 4L3.500 10c-.5 2-1.500 2.500-3 2M2.500 4.500h5M6 7c1.500-.5 2 .5 2.500 2s1 2 2.500 1.500M11.500 7L6 11" /></svg>
          </button>
        </FxBox>
        <FormulaField>
          <FormulaInput aria-label="Строка формул" />
          <button aria-label="Развернуть строку формул"><svg width="8" height="6" viewBox="0 0 8 6" fill="none" stroke="#555" strokeWidth="1.800"><path d="M1 1l3 3 3-3" /></svg></button>
        </FormulaField>
      </FormulaBar>

      <SheetArea>
        <GridPane>
          <GridTable>
            <colgroup>
              <col style={{ width: 54 }} />
              {columns.map((c, i) => <col key={c} style={i === columns.length - 1 ? { width: 41 } : undefined} />)}
            </colgroup>
            <thead>
              <tr>
                <Corner aria-label="Выделить всё"><svg width="11" height="11" viewBox="0 0 11 11"><path d="M11 0v11H0z" fill="#b0b0b0" /></svg></Corner>
                {columns.map(c => <ColHead key={c} scope="col" $sel={c === 'AA'} $last={c === 'AH'}>{c}</ColHead>)}
              </tr>
            </thead>
            <tbody>
              {rows.map(r => (
                <tr key={r}>
                  <RowHead scope="row" $sel={r === 1048559}>{r}</RowHead>
                  {columns.map(c => r === 1048559 && c === 'AA' ? <ActiveCell key={c} /> : <Cell key={c} $last={c === 'AH'} />)}
                </tr>
              ))}
            </tbody>
          </GridTable>
          <GridEnd />
        </GridPane>
        <VScroll>
          <ScrollButton aria-label="Вверх"><ArrowHead d="u" /></ScrollButton>
          <Track><Thumb $w="13px" $h={16} /></Track>
          <ScrollButton aria-label="Вниз"><ArrowHead d="d" /></ScrollButton>
        </VScroll>
        <Overlay width="780" height="290" viewBox="0 0 780 290">
          <g fill="#fc5a4c">
            <path d="M602 20L598 53l-7-10-54 74a5 5 0 0 1-8-6l54-75-12-2z" />
            <path d="M50 206l33-2-9 8 100 50a5 5 0 0 1-5 9L71 221l-2 13z" />
          </g>
          <path d="M753 126h6v4h4v6h-4v4h-6v-4h-4v-6h4z" fill="#fff" stroke="#222" strokeWidth="2" />
        </Overlay>
        <Note $x={90} $y={103}>Обозначение столбцов</Note>
        <Note $x={189} $y={243}>Нумерация строк</Note>
      </SheetArea>

      <SheetBar>
        <SheetNav><ArrowHead d="l" c="#b5b5b5" /><ArrowHead d="r" c="#b5b5b5" /></SheetNav>
        <SheetTab $active>Лист1</SheetTab>
        <SheetTab>Лист2</SheetTab>
        <SheetTab>Лист3</SheetTab>
        <SheetTab>Лист4</SheetTab>
        <SheetTab>Лист5</SheetTab>
        <AddSheet aria-label="Новый лист">
          <svg width="15" height="15" viewBox="0 0 15 15" fill="none" stroke="#666"><circle cx="7.500" cy="7.500" r="6.700" /><path d="M7.500 4v7M4 7.500h7" strokeWidth="1.800" /></svg>
        </AddSheet>
        <BarDots><DotColumn /></BarDots>
        <HScroll>
          <ScrollButton aria-label="Влево"><ArrowHead d="l" /></ScrollButton>
          <Track><Thumb $w="48%" $h={14} /></Track>
          <ScrollButton aria-label="Вправо"><ArrowHead d="r" /></ScrollButton>
        </HScroll>
      </SheetBar>

      <StatusBar>
        <StatusText>Готово</StatusText>
        <ViewButton $active aria-label="Обычный"><svg width="12" height="12" viewBox="0 0 12 12" fill="none" stroke="#555"><path d="M.5 .5h11v11H.5zM.5 4h11M.5 8h11M4 .5v11M8 .5v11" /></svg></ViewButton>
        <ViewButton aria-label="Разметка страницы"><svg width="13" height="12" viewBox="0 0 13 12" fill="none" stroke="#555"><path d="M.5 .5h12v11H.5zM3.500 2.500h6v7h-6zM5 4.500h3M5 6.500h3M5 8h3" /></svg></ViewButton>
        <ViewButton aria-label="Страничный"><svg width="13" height="12" viewBox="0 0 13 12" fill="none" stroke="#555"><path d="M.5 .5h12v11H.5zM4.500 .5v6M8.500 .5v6M.5 6.500h8" /></svg></ViewButton>
        <IconButton $w={12} aria-label="Уменьшить"><svg width="7" height="2" viewBox="0 0 7 2"><rect width="7" height="2" fill="#555" /></svg></IconButton>
        <Zoom type="range" aria-label="Масштаб" min={0} max={100} defaultValue={50} />
        <IconButton $w={7} aria-label="Увеличить"><svg width="7" height="7" viewBox="0 0 7 7"><path d="M0 2.500h7v2H0zM2.500 0h2v7h-2z" fill="#555" /></svg></IconButton>
        <ZoomValue>100%</ZoomValue>
      </StatusBar>
    </Window>
  );
}
